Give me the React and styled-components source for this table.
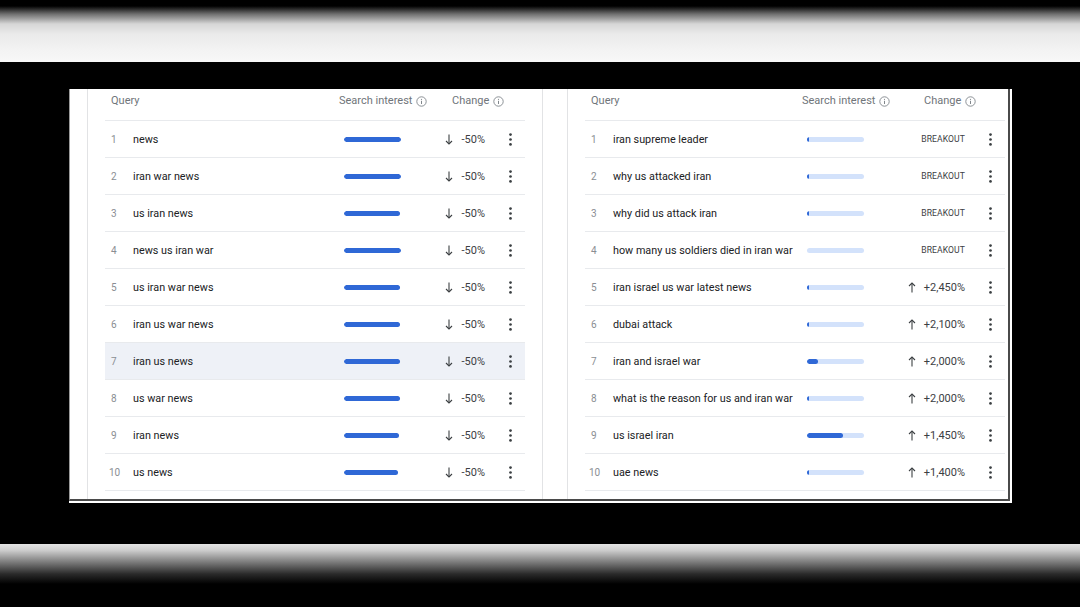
import React from "react";
import styled, { createGlobalStyle } from "styled-components";

const Global = createGlobalStyle`
  html, body { margin: 0; padding: 0; background: #000; }
  body { font-family: Roboto, "Noto Sans", Arial, sans-serif; }
  *, *::before, *::after { box-sizing: border-box; }
`;

const Screen = styled.div`
  width: 1080px;
  height: 607px;
  overflow: hidden;
  display: flex;
  flex-direction: column;
  background: #000;
`;

const TopBand = styled.div`
  height: 62px;
  flex: none;
  background: linear-gradient(
    to bottom,
    #000 0px,
    #000 6px,
    #6e6e6e 14px,
    #d6d6d6 24px,
    #eaeaea 34px,
    #f3f3f3 50px,
    #f8f8f8 62px
  );
`;

const Stage = styled.div`
  flex: none;
  height: 482px;
  padding: 27px 0 0 69px;
`;

const BottomBand = styled.div`
  flex: 1;
  background: linear-gradient(
    to bottom,
    #e4e4e4 0px,
    #cfcfcf 6px,
    #8a8a8a 16px,
    #2a2a2a 30px,
    #000 40px,
    #000 100%
  );
`;

const Panel = styled.div`
  width: 943px;
  height: 414px;
  background: #fff;
  padding: 0 2px 2px 0;
`;

const Frame = styled.div`
  height: 100%;
  border-left: 1px solid #9a9a9a;
  border-right: 2px solid #4a4a4a;
  border-bottom: 2px solid #4a4a4a;
  display: flex;
  gap: 24px;
  padding-left: 17px;
  overflow: hidden;
`;

const Card = styled.section`
  flex: none;
  width: 456px;
  border-left: 1px solid #e2e3e5;
  border-right: 1px solid #e2e3e5;
  padding: 0 17px;
`;

const HeaderRow = styled.div`
  height: 32px;
  padding-top: 5px;
  display: flex;
  align-items: flex-start;
  border-bottom: 1px solid #e8eaed;
  color: #70757a;
  font-size: 11px;
  line-height: 14px;
`;

const HeadQuery = styled.div`
  flex: 1;
  padding-left: 6px;
`;

const HeadInterest = styled.div`
  flex: none;
  width: 101px;
  margin-left: -5px;
  margin-right: 5px;
  display: flex;
  align-items: center;
  gap: 4px;
  white-space: nowrap;
`;

const HeadChange = styled.div`
  flex: none;
  width: ${(p) => p.$w}px;
  padding-left: ${(p) => p.$offset}px;
  display: flex;
  align-items: center;
  gap: 4px;
  white-space: nowrap;
`;

const HeadMenu = styled.div`
  flex: none;
  width: 40px;
`;

const IconSvg = styled.svg`
  flex: none;
  display: block;
`;

const Row = styled.div`
  height: 37px;
  display: flex;
  align-items: center;
  border-bottom: 1px solid #e8eaed;
  background: ${(p) => (p.$active ? "#eef1f7" : "transparent")};
`;

const Num = styled.div`
  flex: none;
  width: 28px;
  padding-left: ${(p) => (p.$wide ? "4px" : "6px")};
  font-size: 10px;
  color: #8a8e93;
`;

const Query = styled.div`
  flex: 1;
  font-size: 10.8px;
  color: #202124;
  white-space: nowrap;
`;

const Interest = styled.div`
  flex: none;
  width: 101px;
  display: flex;
  align-items: center;
`;

const Track = styled.div`
  width: 57px;
  height: 5px;
  border-radius: 3px;
  background: ${(p) => (p.$light ? "#d3e2fb" : "transparent")};
  overflow: hidden;
  display: flex;
`;

const Fill = styled.div`
  height: 100%;
  border-radius: 3px;
  background: #2f68d6;
`;

const Change = styled.div`
  flex: none;
  width: ${(p) => p.$w}px;
  display: flex;
  align-items: center;
  justify-content: space-between;
  color: #3c4043;
  font-size: 11px;
  white-space: nowrap;
`;

const Breakout = styled.span`
  margin-left: auto;
  font-size: 8.6px;
  letter-spacing: 0.1px;
  color: #3c4043;
`;

const Menu = styled.div`
  flex: none;
  width: 40px;
  display: flex;
  justify-content: flex-end;
  padding-right: 13px;
`;

const InfoIcon = () => (
  <IconSvg width="11" height="11" viewBox="0 0 11 11" fill="none">
    <circle cx="5.5" cy="5.5" r="4.7" stroke="#80868b" strokeWidth="0.9" />
    <line x1="5.5" y1="4.8" x2="5.5" y2="8" stroke="#80868b" strokeWidth="1" />
    <circle cx="5.5" cy="3.3" r="0.6" fill="#80868b" />
  </IconSvg>
);

const Arrow = ({ up }) => (
  <IconSvg width="8" height="11" viewBox="0 0 8 11" fill="none">
    {up ? (
      <>
        <line x1="4" y1="1" x2="4" y2="10.5" stroke="#3c4043" strokeWidth="1.1" />
        <polyline points="1,4 4,1 7,4" stroke="#3c4043" strokeWidth="1.1" fill="none" />
      </>
    ) : (
      <>
        <line x1="4" y1="0.5" x2="4" y2="10" stroke="#3c4043" strokeWidth="1.1" />
        <polyline points="1,7 4,10 7,7" stroke="#3c4043" strokeWidth="1.1" fill="none" />
      </>
    )}
  </IconSvg>
);

const Dots = () => (
  <IconSvg width="3" height="13" viewBox="0 0 3 13">
    <circle cx="1.5" cy="1.6" r="1.35" fill="#3c4043" />
    <circle cx="1.5" cy="6.5" r="1.35" fill="#3c4043" />
    <circle cx="1.5" cy="11.4" r="1.35" fill="#3c4043" />
  </IconSvg>
);

const leftRows = [
  { q: "news", w: 57 },
  { q: "iran war news", w: 57 },
  { q: "us iran news", w: 56 },
  { q: "news us iran war", w: 57 },
  { q: "us iran war news", w: 56 },
  { q: "iran us war news", w: 56 },
  { q: "iran us news", w: 56, active: true },
  { q: "us war news", w: 56 },
  { q: "iran news", w: 55 },
  { q: "us news", w: 54 },
].map((r) => ({ ...r, change: "-50%", down: true }));

const rightRows = [
  { q: "iran supreme leader", w: 2, change: "BREAKOUT" },
  { q: "why us attacked iran", w: 2, change: "BREAKOUT" },
  { q: "why did us attack iran", w: 2, change: "BREAKOUT" },
  { q: "how many us soldiers died in iran war", w: 0, change: "BREAKOUT" },
  { q: "iran israel us war latest news", w: 2, change: "+2,450%" },
  { q: "dubai attack", w: 2, change: "+2,100%" },
  { q: "iran and israel war", w: 11, change: "+2,000%" },
  { q: "what is the reason for us and iran war", w: 2, change: "+2,000%" },
  { q: "us israel iran", w: 36, change: "+1,450%" },
  { q: "uae news", w: 2, change: "+1,400%" },
];

function TrendTable({ rows, light, changeW, headOffset }) {
  return (
    <Card>
      <HeaderRow>
        <HeadQuery>Query</HeadQuery>
        <HeadInterest>
          Search interest <InfoIcon />
        </HeadInterest>
        <HeadChange $w={changeW} $offset={headOffset}>
          Change <InfoIcon />
        </HeadChange>
        <HeadMenu />
      </HeaderRow>
      {rows.map((r, i) => (
        <Row key={r.q} $active={r.active}>
          <Num $wide={i === 9}>{i + 1}</Num>
          <Query>{r.q}</Query>
          <Interest>
            <Track $light={light}>
              <Fill style={{ width: `${r.w}px` }} />
            </Track>
          </Interest>
          <Change $w={changeW}>
            {r.change === "BREAKOUT" ? (
              <Breakout>BREAKOUT</Breakout>
            ) : (
              <>
                <Arrow up={!r.down} />
                <span>{r.change}</span>
              </>
            )}
          </Change>
          <Menu>
            <Dots />
          </Menu>
        </Row>
      ))}
    </Card>
  );
}

export default function App() {
  return (
    <>
      <Global />
      <Screen>
        <TopBand />
        <Stage>
          <Panel>
            <Frame>
              <TrendTable rows={leftRows} changeW={40} headOffset={7} />
              <TrendTable rows={rightRows} light changeW={57} headOffset={16} />
            </Frame>
          </Panel>
        </Stage>
        <BottomBand />
      </Screen>
    </>
  );
}
